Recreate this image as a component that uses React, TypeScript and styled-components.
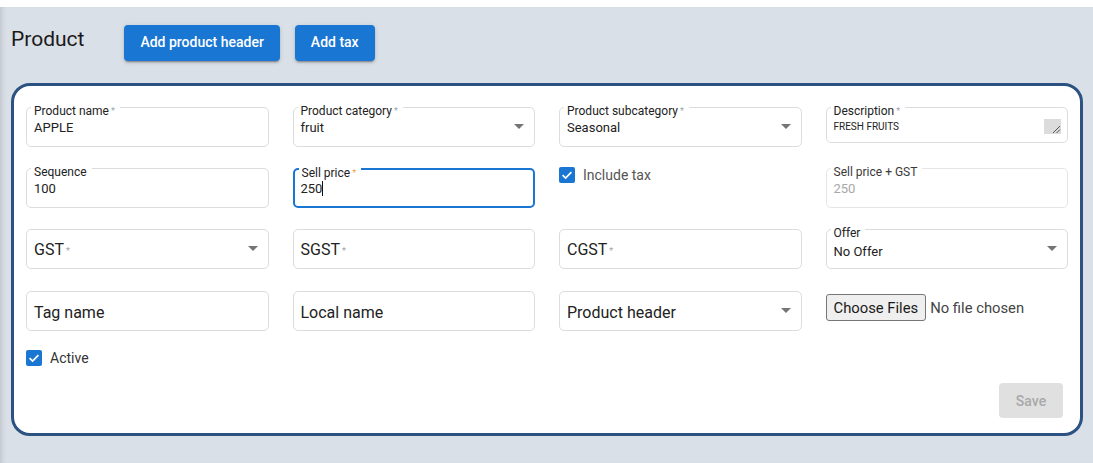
import React from "react";
import styled, { createGlobalStyle } from "styled-components";

const GlobalStyle = createGlobalStyle`
  html, body { margin: 0; padding: 0; background: #ffffff; }
  body { font-family: Roboto, "Noto Sans", Arial, sans-serif; }
  #root { padding-top: 7px; }
  * { box-sizing: border-box; }
`;

const Page = styled.div`
  min-height: 456px;
  background: #dae0e7;
  padding: 18px 10px 26px 11px;
  box-shadow: inset 5px 0 5px -3px rgba(0, 0, 0, 0.12);
`;

const Header = styled.div`
  display: flex;
  align-items: flex-start;
  height: 36px;
  margin-bottom: 22px;
`;

const Title = styled.h1`
  margin: 2px 40px 0 0;
  font-size: 21px;
  line-height: 24px;
  font-weight: 400;
  color: #1a1a1a;
`;

const ActionButton = styled.button`
  height: 36px;
  padding: 0 16px 2px;
  margin-right: 15px;
  border: none;
  border-radius: 4px;
  background: #1976d2;
  color: #ffffff;
  font-family: Roboto, sans-serif;
  font-size: 14px;
  font-weight: 500;
  line-height: 34px;
  box-shadow: 0 3px 1px -2px rgba(0, 0, 0, 0.2), 0 2px 2px 0 rgba(0, 0, 0, 0.14),
    0 1px 5px 0 rgba(0, 0, 0, 0.12);
`;

const Card = styled.div`
  background: #ffffff;
  border: 3px solid #2b5281;
  border-radius: 19px;
  padding: 21px 12px 15px 12px;
`;

const Grid = styled.div`
  display: grid;
  grid-template-columns: repeat(4, 1fr);
  grid-template-rows: 40px 40px 40px 40px;
  column-gap: 24px;
  row-gap: 21px;
`;

const LastRow = styled.div`
  display: contents;
`;

const FieldBox = styled.div<{ $focused?: boolean; $disabled?: boolean; $height?: number; $labeled?: boolean; $shift?: number }>`
  position: relative;
  height: ${(p) => p.$height ?? 40}px;
  margin-top: ${(p) => p.$shift ?? 0}px;
  border: ${(p) => (p.$focused ? "2px solid #1976d2" : p.$disabled ? "1px solid #e6e6e6" : "1px solid #dcdcdc")};
  border-radius: 5px;
  display: flex;
  align-items: ${(p) => (p.$labeled ? "flex-start" : "center")};
  padding: ${(p) => (p.$labeled ? (p.$focused ? "11px 9px 0 6px" : "12px 10px 0 7px") : "3px 10px 0 7px")};
`;

const FloatLabel = styled.span<{ $disabled?: boolean }>`
  position: absolute;
  top: -4px;
  left: 4px;
  padding: 0 5px 0 3px;
  background: #ffffff;
  font-size: 12px;
  line-height: 14px;
  color: ${(p) => (p.$disabled ? "#3a3a3a" : "#222222")};
  white-space: nowrap;
`;

const Star = styled.span<{ $accent?: boolean }>`
  font-size: 9px;
  margin-left: 2px;
  vertical-align: 1px;
  color: ${(p) => (p.$accent ? "#f0a04b" : "#9aa5b1")};
`;

const Value = styled.span<{ $size?: number; $muted?: boolean; $drop?: number }>`
  flex: 1;
  margin-top: ${(p) => p.$drop ?? 0}px;
  font-size: ${(p) => p.$size ?? 13}px;
  line-height: ${(p) => ((p.$size ?? 13) <= 10 ? 13 : 16)}px;
  color: ${(p) => (p.$muted ? "#a8a8a8" : "#222222")};
  white-space: nowrap;
`;

const Placeholder = styled.span`
  flex: 1;
  font-size: 16px;
  line-height: 20px;
  color: #222222;
  white-space: nowrap;
`;

const Caret = styled.span`
  display: inline-block;
  width: 1px;
  height: 15px;
  background: #111;
  vertical-align: -3px;
`;

const ArrowWrap = styled.span<{ $labeled?: boolean }>`
  display: flex;
  align-self: center;
  margin-top: ${(p) => (p.$labeled ? "-14px" : "-5px")};
`;

const Resizer = styled.span`
  align-self: flex-end;
  margin-bottom: 8px;
  margin-right: -4px;
  display: flex;
`;

const CheckRow = styled.label<{ $muted?: boolean }>`
  display: flex;
  align-items: center;
  gap: 8px;
  height: 16px;
  font-size: 14px;
  line-height: 16px;
  color: ${(p) => (p.$muted ? "#555555" : "#333333")};
`;

const CheckCell = styled.div`
  margin-top: -1px;
`;

const FileCell = styled.div`
  display: flex;
  align-items: center;
  gap: 4px;
  padding-top: 4px;
  align-self: start;
`;

const FileButton = styled.button`
  height: 27px;
  padding: 0 7px;
  background: #efefef;
  border: 1px solid #767676;
  border-radius: 3px;
  font-family: Roboto, sans-serif;
  font-size: 14.8px;
  color: #1a1a1a;
`;

const FileText = styled.span`
  font-size: 14.8px;
  color: #444444;
`;

const ActiveRow = styled.div`
  margin-top: 20px;
`;

const Footer = styled.div`
  display: flex;
  justify-content: flex-end;
  margin-top: 17px;
  padding-right: 5px;
`;

const SaveButton = styled.button`
  width: 64px;
  height: 35px;
  border: none;
  border-radius: 4px;
  background: #e0e0e0;
  color: #a9a9a9;
  font-family: Roboto, sans-serif;
  font-size: 14px;
  font-weight: 500;
`;

const Arrow = ({ labeled }: { labeled?: boolean }) => (
  <ArrowWrap $labeled={labeled}>
    <svg width="10" height="5" viewBox="0 0 10 5">
      <path d="M0 0 L10 0 L5 5 Z" fill="#757575" />
    </svg>
  </ArrowWrap>
);

const CheckIcon = () => (
  <svg width="16" height="16" viewBox="0 0 16 16">
    <rect width="16" height="16" rx="2" fill="#1976d2" />
    <path d="M3.6 8.2 L6.6 11.1 L12.4 5.2" stroke="#ffffff" strokeWidth="1.7" fill="none" />
  </svg>
);

type FieldProps = {
  label?: string;
  required?: boolean;
  value?: React.ReactNode;
  placeholder?: string;
  select?: boolean;
  focused?: boolean;
  disabled?: boolean;
  height?: number;
  valueSize?: number;
  valueDrop?: number;
  shift?: number;
  resizer?: boolean;
};

const Field = ({
  label,
  required,
  value,
  placeholder,
  select,
  focused,
  disabled,
  height,
  valueSize,
  valueDrop,
  shift,
  resizer,
}: FieldProps) => (
  <FieldBox $focused={focused} $disabled={disabled} $height={height} $labeled={!!label} $shift={shift}>
    {label && (
      <FloatLabel $disabled={disabled}>
        {label}
        {required && <Star $accent={focused}>*</Star>}
      </FloatLabel>
    )}
    {label ? (
      <Value $size={valueSize} $muted={disabled} $drop={valueDrop}>
        {value}
      </Value>
    ) : (
      <Placeholder>
        {placeholder}
        {required && <Star>*</Star>}
      </Placeholder>
    )}
    {select && <Arrow labeled={!!label} />}
    {resizer && (
      <Resizer>
        <svg width="17" height="15" viewBox="0 0 17 15">
          <rect width="17" height="15" fill="#dcdcdc" />
          <path d="M9 14 L16 7 M12.5 14 L16 10.5" stroke="#555" strokeWidth="1" />
        </svg>
      </Resizer>
    )}
  </FieldBox>
);

export default function App() {
  return (
    <>
      <GlobalStyle />
      <Page>
        <Header>
          <Title>Product</Title>
          <ActionButton>Add product header</ActionButton>
          <ActionButton>Add tax</ActionButton>
        </Header>
        <Card>
          <Grid>
            <Field label="Product name" required value="APPLE" />
            <Field label="Product category" required value="fruit" select />
            <Field label="Product subcategory" required value="Seasonal" select />
            <Field label="Description" required value="FRESH FRUITS" height={36} valueSize={10} resizer />

            <Field label="Sequence" value="100" />
            <Field
              label="Sell price"
              required
              focused
              value={
                <>
                  250
                  <Caret />
                </>
              }
            />
            <CheckCell>
              <CheckRow $muted>
                <CheckIcon />
                Include tax
              </CheckRow>
            </CheckCell>
            <Field label="Sell price + GST" value="250" disabled />

            <Field placeholder="GST" required select />
            <Field placeholder="SGST" required />
            <Field placeholder="CGST" required />
            <Field label="Offer" value="No Offer" select valueDrop={2} />

            <LastRow>
              <Field placeholder="Tag name" shift={1} />
              <Field placeholder="Local name" shift={1} />
              <Field placeholder="Product header" select shift={1} />
              <FileCell>
                <FileButton>Choose Files</FileButton>
                <FileText>No file chosen</FileText>
              </FileCell>
            </LastRow>
          </Grid>
          <ActiveRow>
            <CheckRow>
              <CheckIcon />
              Active
            </CheckRow>
          </ActiveRow>
          <Footer>
            <SaveButton>Save</SaveButton>
          </Footer>
        </Card>
      </Page>
    </>
  );
}
